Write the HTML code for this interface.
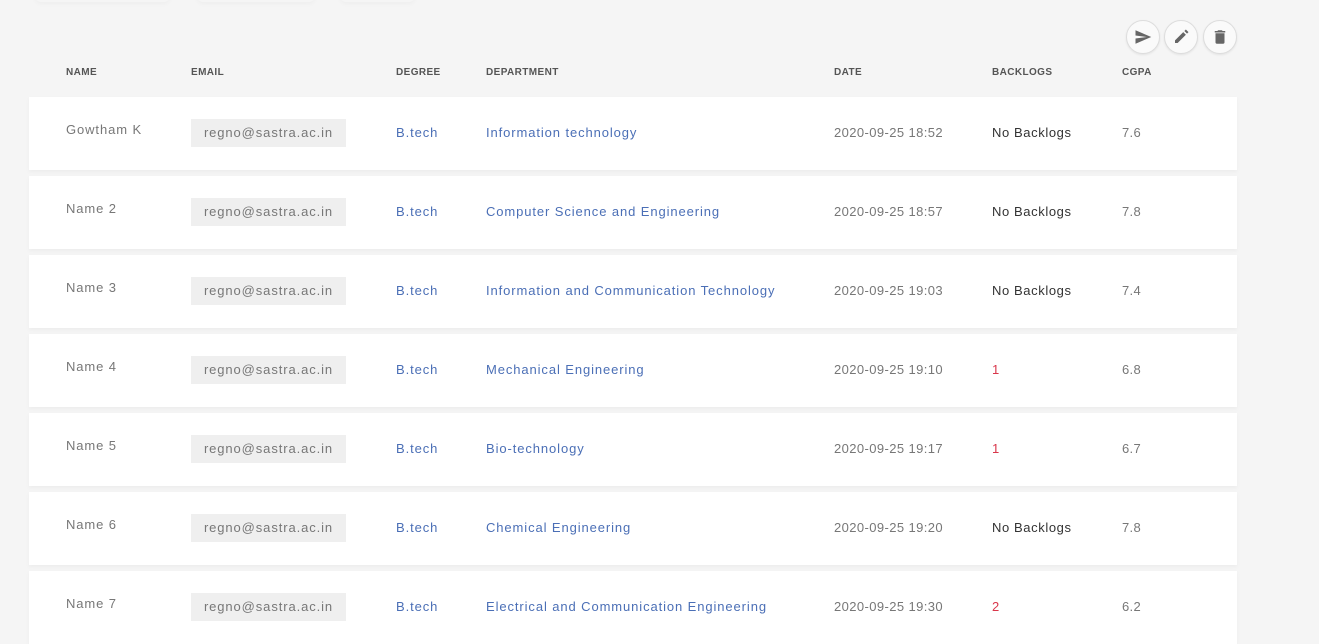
<!DOCTYPE html><html><head><style>
body{margin:0;width:1319px;height:644px;background:#f5f5f5;font-family:"Liberation Sans",sans-serif;position:relative;overflow:hidden}
.btn{position:absolute;top:20px;width:32px;height:32px;border-radius:50%;background:#fafafa;border:1px solid #ddd;box-shadow:0 1px 2px rgba(0,0,0,.08)}
.btn svg{position:absolute;left:7px;top:7px}
.h{position:absolute;top:67px;font-size:10px;font-weight:bold;color:#555;letter-spacing:.4px}
.row{position:absolute;left:29px;width:1208px;height:73px;background:#fff;box-shadow:0 2px 4px rgba(0,0,0,.04)}
.row span{position:absolute;font-size:13px;white-space:nowrap;letter-spacing:.9px}
.n{left:37px;top:25px;color:#777}
.e{left:162px;top:22px;width:155px;height:28px;line-height:28px;background:#efefef;color:#777;text-align:center}
.d{left:367px;top:28px;color:#4b6fb6}
.p{left:457px;top:28px;color:#4b6fb6}
.row .t{left:805px;top:28px;color:#777;letter-spacing:.4px}
.row .b{left:963px;top:28px;color:#333;letter-spacing:.6px}
.r{color:#d9374b!important}
.row .c{left:1093px;top:28px;color:#777;letter-spacing:.3px}
.sh{position:absolute;top:-10px;height:12px;border-radius:6px;box-shadow:0 2px 5px rgba(0,0,0,.03);background:#f5f5f5}
</style></head><body>
<div class="sh" style="left:35px;width:135px"></div>
<div class="sh" style="left:197px;width:118px"></div>
<div class="sh" style="left:340px;width:75px"></div>
<div class="btn" style="left:1126px"><svg width="18" height="18" viewBox="0 0 24 24"><path d="M2 21l21-9L2 3v7l15 2-15 2z" fill="#666"/></svg></div>
<div class="btn" style="left:1164px"><svg width="18" height="18" viewBox="0 0 24 24"><path d="M4 20v-3.5L15 5.5l3.5 3.5L7.5 20zM16.5 4l2-2 3.5 3.5-2 2z" fill="#666"/></svg></div>
<div class="btn" style="left:1203px"><svg width="18" height="18" viewBox="0 0 24 24"><path d="M6 19a2 2 0 002 2h8a2 2 0 002-2V7H6zM19 4h-3.5l-1-1h-5l-1 1H5v2h14z" fill="#666"/></svg></div>
<div class="h" style="left:66px">NAME</div><div class="h" style="left:191px">EMAIL</div><div class="h" style="left:396px">DEGREE</div><div class="h" style="left:486px">DEPARTMENT</div><div class="h" style="left:834px">DATE</div><div class="h" style="left:992px">BACKLOGS</div><div class="h" style="left:1122px">CGPA</div>
<div class="row" style="top:97px"><span class="n">Gowtham K</span><span class="e">regno@sastra.ac.in</span><span class="d">B.tech</span><span class="p">Information technology</span><span class="t">2020-09-25 18:52</span><span class="b">No Backlogs</span><span class="c">7.6</span></div>
<div class="row" style="top:176px"><span class="n">Name 2</span><span class="e">regno@sastra.ac.in</span><span class="d">B.tech</span><span class="p">Computer Science and Engineering</span><span class="t">2020-09-25 18:57</span><span class="b">No Backlogs</span><span class="c">7.8</span></div>
<div class="row" style="top:255px"><span class="n">Name 3</span><span class="e">regno@sastra.ac.in</span><span class="d">B.tech</span><span class="p">Information and Communication Technology</span><span class="t">2020-09-25 19:03</span><span class="b">No Backlogs</span><span class="c">7.4</span></div>
<div class="row" style="top:334px"><span class="n">Name 4</span><span class="e">regno@sastra.ac.in</span><span class="d">B.tech</span><span class="p">Mechanical Engineering</span><span class="t">2020-09-25 19:10</span><span class="b r">1</span><span class="c">6.8</span></div>
<div class="row" style="top:413px"><span class="n">Name 5</span><span class="e">regno@sastra.ac.in</span><span class="d">B.tech</span><span class="p">Bio-technology</span><span class="t">2020-09-25 19:17</span><span class="b r">1</span><span class="c">6.7</span></div>
<div class="row" style="top:492px"><span class="n">Name 6</span><span class="e">regno@sastra.ac.in</span><span class="d">B.tech</span><span class="p">Chemical Engineering</span><span class="t">2020-09-25 19:20</span><span class="b">No Backlogs</span><span class="c">7.8</span></div>
<div class="row" style="top:571px"><span class="n">Name 7</span><span class="e">regno@sastra.ac.in</span><span class="d">B.tech</span><span class="p">Electrical and Communication Engineering</span><span class="t">2020-09-25 19:30</span><span class="b r">2</span><span class="c">6.2</span></div>
</body></html>
